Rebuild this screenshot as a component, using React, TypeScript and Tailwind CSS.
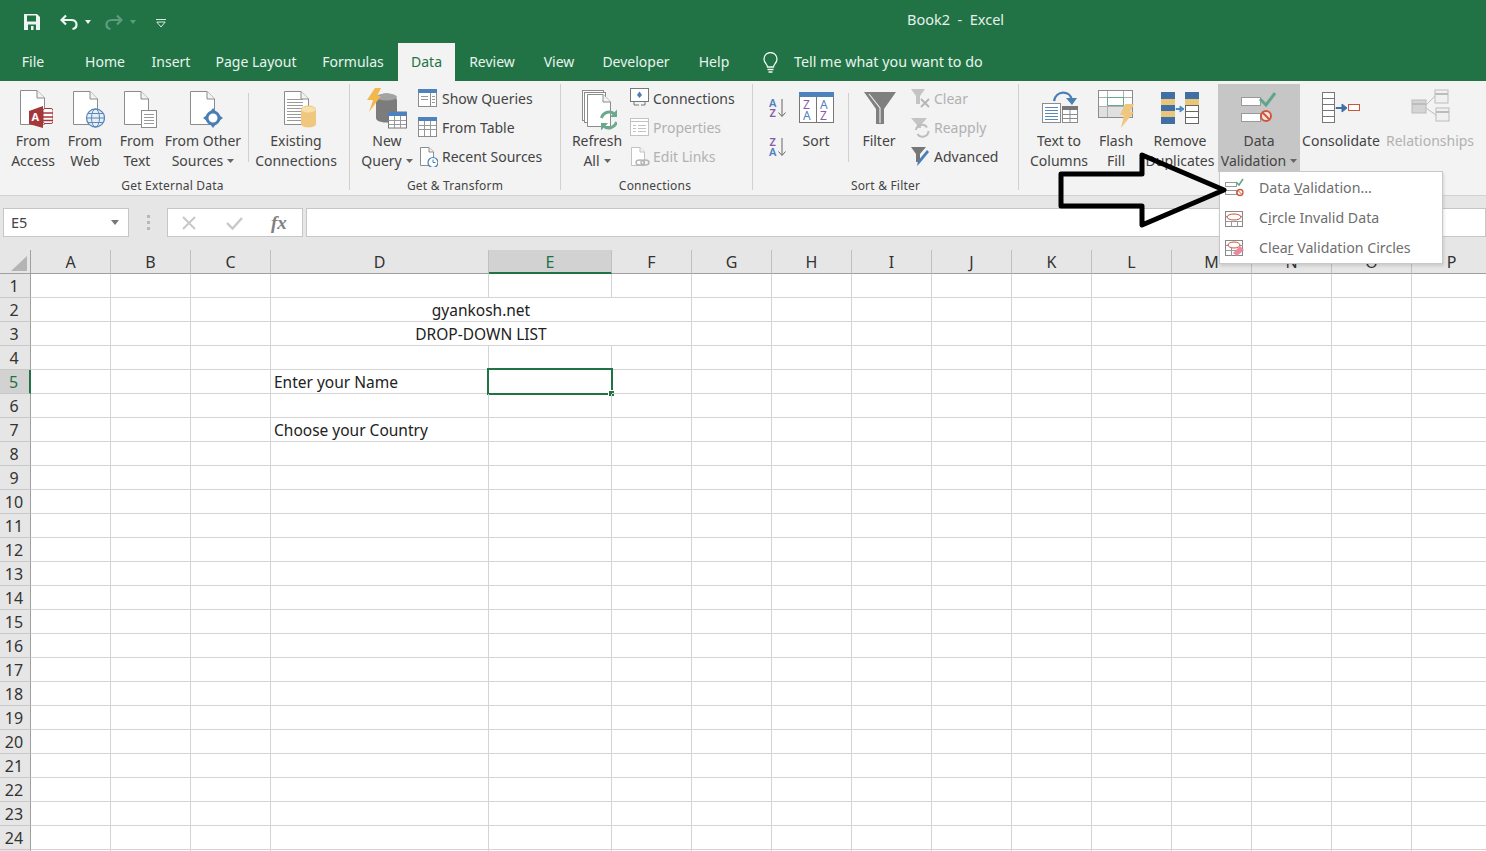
import React from "react";

const F = "font-['Noto_Sans',sans-serif]";

function I({ x, y, w, h, children, cls = "" }: { x: number; y: number; w: number; h: number; children?: React.ReactNode; cls?: string }) {
  return (
    <svg width={w} height={h} viewBox={`${x} ${y} ${w} ${h}`} className={"shrink-0 block " + cls}>
      {children}
    </svg>
  );
}

function Page({ x, y, w = 24, h = 34, stroke = "#8c8c8c", fold = 8 }: { x: number; y: number; w?: number; h?: number; stroke?: string; fold?: number }) {
  return (
    <g>
      <path d={`M${x + 0.5} ${y + 0.5}H${x + w - fold}L${x + w - 0.5} ${y + fold}V${y + h - 0.5}H${x + 0.5}Z`} fill="#fff" stroke={stroke} />
      <path d={`M${x + w - fold} ${y + 0.5}V${y + fold}H${x + w - 0.5}`} fill="#f3f3f3" stroke={stroke} />
    </g>
  );
}

function Lines({ x, y, w, n, gap = 3, c = "#9a9a9a" }: { x: number; y: number; w: number; n: number; gap?: number; c?: string }) {
  return (
    <g stroke={c}>
      {Array.from({ length: n }).map((_, i) => (
        <path key={i} d={`M${x} ${y + i * gap + 0.5}H${x + w}`} />
      ))}
    </g>
  );
}

function Caret({ c = "#666" }: { c?: string }) {
  return (
    <svg width="7" height="4" viewBox="0 0 7 4" className="inline-block ml-[4px] mb-[2px]">
      <path d="M0 0H7L3.5 4Z" fill={c} />
    </svg>
  );
}

function Big({ cls, a, b, caret, icon, dim }: { cls: string; a: string; b?: string; caret?: boolean; icon: React.ReactNode; dim?: boolean }) {
  return (
    <div className={"flex flex-col items-center shrink-0 pt-[4px] " + cls}>
      <div className="h-[42px] flex justify-center">{icon}</div>
      <div className={"mt-[1px] text-center leading-[20px] text-[14px] whitespace-nowrap " + (dim ? "text-[#b1b1b1]" : "text-[#444444]")}>
        <div>{a}</div>
        {b && (
          <div>
            {b}
            {caret && <Caret />}
          </div>
        )}
      </div>
    </div>
  );
}

function Small({ icon, text, dim, gap }: { icon: React.ReactNode; text: string; dim?: boolean; gap: string }) {
  return (
    <div className={"h-[29px] flex items-center text-[14px] whitespace-nowrap " + gap + " " + (dim ? "text-[#b1b1b1]" : "text-[#444444]")}>
      {icon}
      <span>{text}</span>
    </div>
  );
}

function Sep({ cls }: { cls: string }) {
  return <div className={"w-px bg-[#d0d0d0] shrink-0 " + cls} />;
}

function GroupLabel({ text, cls = "" }: { text: string; cls?: string }) {
  return <div className={"h-[20px] leading-[20px] text-center text-[12px] text-[#444444] tracking-[0.2px] " + cls}>{text}</div>;
}

const tabs: [string, string][] = [
  ["File", "w-[66px]"],
  ["Home", "w-[78px]"],
  ["Insert", "w-[54px]"],
  ["Page Layout", "w-[116px]"],
  ["Formulas", "w-[78px]"],
];
const tabs2: [string, string][] = [
  ["Review", "w-[74px]"],
  ["View", "w-[60px]"],
  ["Developer", "w-[94px]"],
  ["Help", "w-[62px]"],
];

function TitleBar() {
  return (
    <div className="h-[43px] bg-[#217346] relative flex items-center">
      <div className="flex items-center pl-[24px]">
        <svg width="16" height="16" viewBox="0 0 16 16" className="shrink-0">
          <path d="M0 0H13L16 3V16H0Z" fill="#eef6f1" />
          <rect x="3" y="1.5" width="9" height="6" fill="#217346" />
          <rect x="4" y="10.5" width="8" height="5.5" fill="#217346" />
          <rect x="7" y="12" width="2.5" height="4" fill="#eef6f1" />
        </svg>
        <svg width="18" height="16" viewBox="0 0 18 16" className="ml-[20px] shrink-0">
          <path d="M6 1.5L1.5 6L6 10.5" fill="none" stroke="#eef6f1" strokeWidth="2.2" />
          <path d="M2 6H11C14.5 6 16.5 8 16.5 10.5C16.5 13 15 14.6 12.5 15" fill="none" stroke="#eef6f1" strokeWidth="2.2" />
        </svg>
        <svg width="6" height="4" viewBox="0 0 6 4" className="ml-[7px] shrink-0">
          <path d="M0 0H6L3 4Z" fill="#eef6f1" />
        </svg>
        <svg width="18" height="16" viewBox="0 0 18 16" className="ml-[14px] shrink-0">
          <path d="M12 1.5L16.5 6L12 10.5" fill="none" stroke="#5f9c7c" strokeWidth="2.2" />
          <path d="M16 6H7C3.5 6 1.5 8 1.5 10.5C1.5 13 3 14.6 5.5 15" fill="none" stroke="#5f9c7c" strokeWidth="2.2" />
        </svg>
        <svg width="6" height="4" viewBox="0 0 6 4" className="ml-[7px] shrink-0">
          <path d="M0 0H6L3 4Z" fill="#5f9c7c" />
        </svg>
        <svg width="10" height="9" viewBox="0 0 10 9" className="ml-[20px] mt-[3px] shrink-0">
          <path d="M0 0.5H10" stroke="#dbe9e1" />
          <path d="M0.8 3H9.2L5 8Z" fill="none" stroke="#dbe9e1" />
        </svg>
      </div>
      <div className="absolute left-[907px] top-[9px] text-[14.5px] leading-[20px] text-[#e6f1eb] whitespace-pre">Book2  -  Excel</div>
    </div>
  );
}

function TabRow() {
  return (
    <div className="h-[38px] bg-[#217346] flex text-[14px] text-[#e8f3ed]">
      {tabs.map(([t, w]) => (
        <div key={t} className={"text-center leading-[37px] " + w}>
          {t}
        </div>
      ))}
      <div className="w-[6px]" />
      <div className="w-[57px] bg-[#f3f3f3] text-[#217346] text-center leading-[37px]">Data</div>
      {tabs2.map(([t, w]) => (
        <div key={t} className={"text-center leading-[37px] " + w}>
          {t}
        </div>
      ))}
      <div className="ml-[18px] flex items-center gap-[16px] h-[37px]">
        <svg width="15" height="22" viewBox="0 0 15 22" className="shrink-0 mt-[2px]">
          <path d="M4.5 15C4.5 12.5 1 11 1 7A6.5 6.5 0 0 1 14 7C14 11 10.5 12.5 10.5 15Z" fill="none" stroke="#eef6f1" strokeWidth="1.3" />
          <path d="M4.5 17.5H10.5M5.5 20H9.5" stroke="#eef6f1" strokeWidth="1.3" />
        </svg>
        <span className="text-[14.3px] text-[#e8f3ed] whitespace-nowrap">Tell me what you want to do</span>
      </div>
    </div>
  );
}

const G = "#8c8c8c";

function Ribbon() {
  return (
    <div className="h-[115px] bg-[#f3f3f3] border-b border-[#d2d2d2] flex pt-[3px]">
      {/* Get External Data */}
      <div className="w-[350px] shrink-0 flex flex-col border-r border-[#d0d0d0] mb-[5px]">
        <div className="h-[88px] flex pl-[7px]">
          <Big cls="w-[52px]" a="From" b="Access" icon={
            <I x={13} y={88} w={40} h={42}>
              <Page x={20} y={90} w={25} h={35} />
              <path d="M29 111L43 106V128L29 124Z" fill="#a4373a" />
              <text x={31.5} y={121} fontSize="11" fontWeight="700" fill="#fff" fontFamily="Noto Sans">A</text>
              <rect x={43} y={108.5} width={10} height={15} rx={2} fill="#fff" stroke="#a4373a" />
              <path d="M43 113H53M43 117H53M43 120.5H53" stroke="#a4373a" strokeWidth="1.4" />
            </I>} />
          <Big cls="w-[52px]" a="From" b="Web" icon={
            <I x={65} y={88} w={40} h={42}>
              <Page x={73} y={91} w={25} h={34} />
              <circle cx={95.5} cy={118} r={9} fill="#e6eef7" stroke="#5b88b8" strokeWidth="1.3" />
              <ellipse cx={95.5} cy={118} rx={4} ry={9} fill="none" stroke="#5b88b8" />
              <path d="M86.5 118H104.5M88 113.5H103M88 122.5H103" stroke="#5b88b8" />
            </I>} />
          <Big cls="w-[52px]" a="From" b="Text" icon={
            <I x={117} y={88} w={40} h={42}>
              <Page x={124} y={91} w={25} h={34} />
              <rect x={141.5} y={110.5} width={15} height={17} fill="#fff" stroke={G} />
              <Lines x={144} y={114} w={10} n={4} />
            </I>} />
          <Big cls="w-[80px]" a="From Other" b="Sources" caret icon={
            <I x={183} y={88} w={40} h={42}>
              <Page x={190} y={91} w={25} h={34} />
              <circle cx={213} cy={118} r={6} fill="#fff" stroke="#4a7fb5" strokeWidth="3" />
              <path d="M213 108L216 112H210ZM213 128L216 124H210ZM203 118L207 115V121ZM223 118L219 115V121Z" fill="#4a7fb5" />
            </I>} />
          <Sep cls="ml-[5px] mt-[9px] h-[69px]" />
          <Big cls="w-[86px] ml-[4px]" a="Existing" b="Connections" icon={
            <I x={276} y={88} w={42} h={42}>
              <Page x={285} y={91} w={25} h={34} />
              <Lines x={288} y={99} w={16} n={8} />
              <path d="M302 110C302 104 317 104 317 110V124C317 128.5 302 128.5 302 124Z" fill="#f0c77e" />
              <ellipse cx={309.5} cy={109.5} rx={7} ry={3} fill="#f7dfae" />
            </I>} />
        </div>
        <GroupLabel text="Get External Data" cls="pr-[4px] mt-[5px]" />
      </div>

      {/* Get & Transform */}
      <div className="w-[211px] shrink-0 flex flex-col border-r border-[#d0d0d0] mb-[5px]">
        <div className="h-[88px] flex pl-[6px]">
          <Big cls="w-[62px]" a="New" b="Query" caret icon={
            <I x={367} y={88} w={40} h={42}>
              <path d="M376 101C376 91 397 91 397 101V118C397 124 376 124 376 118Z" fill="#7c7c7c" />
              <ellipse cx={386.5} cy={97} rx={10.5} ry={3.5} fill="#a3a3a3" />
              <path d="M375 88H381L377 96H381L369 112L373 100H367Z" fill="#f2b84b" />
              <rect x={388.5} y={112} width={18} height={16} fill="#fff" stroke="#777" />
              <rect x={388} y={112} width={19} height={4} fill="#4f81bd" />
              <path d="M388.5 120.5H406M388.5 124.5H406M394.5 116V128M400.5 116V128" stroke="#999" />
            </I>} />
          <div className="flex flex-col">
            <Small gap="gap-[4px]" text="Show Queries" icon={
              <I x={418} y={88} w={20} h={21}>
                <rect x={418.5} y={89.5} width={18} height={17} fill="#fff" stroke={G} />
                <rect x={418} y={89} width={19} height={4} fill="#4f81bd" />
                <path d="M430.5 93V106" stroke={G} />
                <Lines x={432} y={96} w={3} n={3} gap={3} />
                <Lines x={421} y={96} w={7} n={2} gap={3} />
              </I>} />
            <Small gap="gap-[4px]" text="From Table" icon={
              <I x={418} y={117} w={20} h={21}>
                <rect x={418.5} y={117.5} width={18} height={19} fill="#fff" stroke={G} />
                <rect x={418} y={117} width={19} height={4} fill="#4f81bd" />
                <path d="M418.5 125.5H436M418.5 129.5H436M424.5 121V136M430.5 121V136" stroke="#999" />
              </I>} />
            <Small gap="gap-[4px]" text="Recent Sources" icon={
              <I x={418} y={146} w={20} h={21}>
                <Page x={420} y={147} w={14} h={19} fold={5} />
                <circle cx={433} cy={162.5} r={5} fill="#fff" stroke="#4a7fb5" strokeWidth="1.2" />
                <path d="M433 159.5V162.5H435.5" fill="none" stroke="#4a7fb5" />
              </I>} />
          </div>
        </div>
        <GroupLabel text="Get & Transform" cls="mt-[5px]" />
      </div>

      {/* Connections */}
      <div className="w-[192px] shrink-0 flex flex-col border-r border-[#d0d0d0] mb-[5px]">
        <div className="h-[88px] flex pl-[6px]">
          <Big cls="w-[60px]" a="Refresh" b="All" caret icon={
            <I x={577} y={88} w={40} h={42}>
              <rect x={582.5} y={90.5} width={21} height={30} fill="#fff" stroke={G} />
              <rect x={584.5} y={92.5} width={21} height={30} fill="#fff" stroke={G} />
              <Page x={587} y={94} w={24} h={33} />
              <path d="M601.5 118A8 8 0 0 1 615 114.5" fill="none" stroke="#6ba98f" strokeWidth="3" />
              <path d="M616.5 122A8 8 0 0 1 603 125.5" fill="none" stroke="#6ba98f" strokeWidth="3" />
              <path d="M617 109.5V117H610ZM601 130.5V123H608Z" fill="#6ba98f" />
            </I>} />
          <div className="flex flex-col ml-[3px]">
            <Small gap="gap-[3px]" text="Connections" icon={
              <I x={630} y={88} w={20} h={21}>
                <rect x={630.5} y={88.5} width={18} height={13} fill="#fff" stroke="#777" />
                <path d="M639.5 91.5L642 95L639.5 98L637 95Z" fill="#4a7fb5" />
                <path d="M634 101.5V105H639M645 101.5V105H641" fill="none" stroke="#777" />
              </I>} />
            <Small gap="gap-[3px]" dim text="Properties" icon={
              <I x={630} y={117} w={20} h={21}>
                <rect x={630.5} y={118.5} width={18} height={17} fill="#fff" stroke="#c2c2c2" />
                <path d="M630 121.5H649" stroke="#c2c2c2" />
                <path d="M633 125.5H636M633 128.5H636M633 131.5H636M638 125.5H646M638 128.5H646M638 131.5H646" stroke="#c2c2c2" />
              </I>} />
            <Small gap="gap-[3px]" dim text="Edit Links" icon={
              <I x={630} y={146} w={20} h={21}>
                <Page x={631} y={147} w={14} h={19} fold={5} stroke="#c2c2c2" />
                <ellipse cx={640} cy={162.5} rx={4} ry={2.5} fill="none" stroke="#b5b5b5" strokeWidth="1.5" />
                <ellipse cx={645} cy={162.5} rx={4} ry={2.5} fill="none" stroke="#b5b5b5" strokeWidth="1.5" />
              </I>} />
          </div>
        </div>
        <GroupLabel text="Connections" cls="pr-[3px] mt-[5px]" />
      </div>

      {/* Sort & Filter */}
      <div className="w-[266px] shrink-0 flex flex-col border-r border-[#d0d0d0] mb-[5px]">
        <div className="h-[88px] flex pl-[15px]">
          <div className="flex flex-col w-[20px] shrink-0 pt-[13px] gap-[18px]">
            <I x={768} y={97} w={20} h={21}>
              <text x={769} y={106.5} fontSize="11" fontWeight="600" fill="#4f81bd" fontFamily="Noto Sans">A</text>
              <text x={769.5} y={116.5} fontSize="11" fontWeight="600" fill="#8a5aa8" fontFamily="Noto Sans">Z</text>
              <path d="M782 99V116M778.5 112.5L782 116.5L785.5 112.5" fill="none" stroke="#666" />
            </I>
            <I x={768} y={136} w={20} h={21}>
              <text x={769.5} y={146} fontSize="11" fontWeight="600" fill="#8a5aa8" fontFamily="Noto Sans">Z</text>
              <text x={769} y={156} fontSize="11" fontWeight="600" fill="#4f81bd" fontFamily="Noto Sans">A</text>
              <path d="M782 138V155M778.5 151.5L782 155.5L785.5 151.5" fill="none" stroke="#666" />
            </I>
          </div>
          <Big cls="w-[40px] ml-[8px]" a="Sort" icon={
            <I x={798} y={88} w={36} h={42}>
              <rect x={799.5} y={92.5} width={34} height={30} fill="#fff" stroke="#777" />
              <rect x={799} y={92} width={35} height={5} fill="#4f81bd" />
              <path d="M816.5 97V122" stroke="#777" />
              <text x={803} y={109} fontSize="12" fill="#8a5aa8" fontFamily="Noto Sans">Z</text>
              <text x={803} y={120} fontSize="12" fill="#4f81bd" fontFamily="Noto Sans">A</text>
              <text x={820} y={109} fontSize="12" fill="#4f81bd" fontFamily="Noto Sans">A</text>
              <text x={820} y={120} fontSize="12" fill="#8a5aa8" fontFamily="Noto Sans">Z</text>
            </I>} />
          <Sep cls="ml-[12px] mt-[9px] h-[69px]" />
          <Big cls="w-[42px] ml-[9px]" a="Filter" icon={
            <I x={859} y={88} w={40} h={42}>
              <path d="M864 92H896L884 109V124H876V109Z" fill="#7f7f7f" />
              <path d="M869 94L880 108V123" fill="none" stroke="#e8e8e8" strokeWidth="1.2" />
            </I>} />
          <div className="flex flex-col ml-[11px]">
            <Small gap="gap-[3px]" dim text="Clear" icon={
              <I x={911} y={88} w={20} h={21}>
                <path d="M911 89H925L920 96V104H916V96Z" fill="#c4c4c4" />
                <path d="M921 99L929 107M929 99L921 107" stroke="#b5b5b5" strokeWidth="1.8" />
              </I>} />
            <Small gap="gap-[3px]" dim text="Reapply" icon={
              <I x={911} y={117} w={20} h={21}>
                <path d="M911 118H927L921 125V128H917V125Z" fill="#c4c4c4" />
                <path d="M916 130A6 6 0 0 1 927 127.5" fill="none" stroke="#bdbdbd" strokeWidth="2" />
                <path d="M928.5 131A6 6 0 0 1 917.5 134" fill="none" stroke="#bdbdbd" strokeWidth="2" />
              </I>} />
            <Small gap="gap-[3px]" text="Advanced" icon={
              <I x={911} y={146} w={20} h={21}>
                <path d="M911 147H926L920 154V162H916V154Z" fill="#777" />
                <path d="M929 152L920 163L917 166L918 161L927 150Z" fill="#4a7fb5" />
              </I>} />
          </div>
        </div>
        <GroupLabel text="Sort & Filter" cls="mt-[5px]" />
      </div>

      {/* Data Tools */}
      <div className="flex-1 flex pl-[8px] h-[88px]">
        <Big cls="w-[64px]" a="Text to" b="Columns" icon={
          <I x={1039} y={88} w={40} h={42}>
            <rect x={1042.5} y={103.5} width={18} height={19} fill="#fff" stroke={G} />
            <Lines x={1045} y={107} w={13} n={5} c="#5b88b8" />
            <rect x={1062.5} y={106.5} width={15} height={16} fill="#fff" stroke={G} />
            <rect x={1062} y={106} width={16} height={4} fill="#777" />
            <path d="M1062.5 114.5H1078M1062.5 118.5H1078M1070 110V122" stroke={G} />
            <path d="M1054 101C1056 90 1070 90 1072 100" fill="none" stroke="#4a7fb5" strokeWidth="2.4" />
            <path d="M1066 98H1077L1072 105Z" fill="#4a7fb5" />
          </I>} />
        <Big cls="w-[46px] ml-[2px]" a="Flash" b="Fill" icon={
          <I x={1097} y={88} w={40} h={42}>
            <rect x={1099.5} y={90.5} width={34} height={27} fill="#fff" stroke={G} />
            <rect x={1100} y={106} width={33} height={11} fill="#e0e0e0" />
            <path d="M1100 97.5H1133M1100 106.5H1133M1108.5 91V117M1124.5 91V106" stroke="#b0b0b0" />
            <rect x={1108.5} y={97.5} width={16} height={8} fill="#fff" stroke="#6ba98f" />
            <path d="M1126 104H1135L1131 112H1135L1122 128L1125 115H1121Z" fill="#f0c77e" />
          </I>} />
        <Big cls="w-[76px] ml-[3px]" a="Remove" b="Duplicates" icon={
          <I x={1160} y={88} w={40} h={42}>
            <rect x={1161} y={92} width={14} height={32} fill="#3f6fa5" />
            <rect x={1161} y={99} width={14} height={6} fill="#e9c679" />
            <rect x={1161} y={111} width={14} height={6} fill="#e9c679" />
            <rect x={1185.5} y={92.5} width={13} height={31} fill="#fff" stroke="#666" />
            <rect x={1185} y={92} width={14} height={7} fill="#3f6fa5" />
            <rect x={1185} y={99} width={14} height={6} fill="#e9c679" />
            <path d="M1185 105.5H1199M1185 111.5H1199M1185 117.5H1199" stroke="#666" />
            <path d="M1176 108.5H1180V106L1184 109L1180 112V109.5H1176Z" fill="#4a8ac5" stroke="#4a8ac5" />
          </I>} />
        <Big cls="w-[82px] bg-[#c6c6c6]" a="Data" b="Validation" caret icon={
          <I x={1239} y={88} w={40} h={42}>
            <rect x={1241.5} y={97.5} width={19} height={8} fill="#fff" stroke="#999" />
            <rect x={1241.5} y={113.5} width={19} height={8} fill="#fff" stroke="#999" />
            <path d="M1260 99L1266 105L1275 93" fill="none" stroke="#5fa58c" strokeWidth="3" />
            <circle cx={1266} cy={116} r={5} fill="#f3e3dc" stroke="#d0563b" strokeWidth="2" />
            <path d="M1262.5 112.5L1269.5 119.5" stroke="#d0563b" strokeWidth="2" />
          </I>} />
        <Big cls="w-[82px]" a="Consolidate" icon={
          <I x={1321} y={88} w={42} h={42}>
            <rect x={1323.5} y={92.5} width={12} height={30} fill="#fff" stroke="#777" />
            <path d="M1324 98.5H1335M1324 104.5H1335M1324 110.5H1335M1324 116.5H1335" stroke="#777" />
            <path d="M1337 107.5H1343V104L1348 108L1343 112V108.5H1337Z" fill="#3f6fa5" stroke="#3f6fa5" />
            <rect x={1349.5} y={104.5} width={11} height={6} fill="#fff" stroke="#c8553d" />
          </I>} />
        <Big cls="w-[96px]" dim a="Relationships" icon={
          <I x={1410} y={88} w={40} h={42}>
            <rect x={1412} y={100} width={14} height={13} fill="#d4d4d4" stroke="#bcbcbc" />
            <rect x={1435} y={90} width={13} height={13} fill="#f0f0f0" stroke="#bcbcbc" />
            <rect x={1436} y={108} width={13} height={13} fill="#f0f0f0" stroke="#bcbcbc" />
            <path d="M1412 104H1426M1435 94H1448M1436 112H1449" stroke="#bcbcbc" strokeWidth="2" />
            <path d="M1426 105L1435 96M1426 108L1436 115" fill="none" stroke="#bcbcbc" />
          </I>} />
      </div>
    </div>
  );
}

function FormulaBar() {
  return (
    <div className="h-[54px] bg-[#e6e6e6] flex items-start pt-[12px] pl-[3px]">
      <div className="w-[126px] h-[29px] bg-white border border-[#c6c6c6] flex items-center justify-between px-[7px] text-[14.5px] text-[#444444] shrink-0">
        <span>E5</span>
        <svg width="8" height="5" viewBox="0 0 8 5" className="mr-[2px]">
          <path d="M0 0H8L4 5Z" fill="#777" />
        </svg>
      </div>
      <div className="w-[38px] h-[29px] flex flex-col items-center justify-center gap-[3px] shrink-0">
        <div className="w-[3px] h-[3px] bg-[#b8b8b8]" />
        <div className="w-[3px] h-[3px] bg-[#b8b8b8]" />
        <div className="w-[3px] h-[3px] bg-[#b8b8b8]" />
      </div>
      <div className="w-[136px] h-[29px] bg-white border border-[#c6c6c6] flex items-center shrink-0 relative pl-[13px] gap-[29px]">
        <svg width="16" height="14" viewBox="0 0 16 14">
          <path d="M2 1L14 13M14 1L2 13" stroke="#c8c8c8" strokeWidth="2" />
        </svg>
        <svg width="17" height="14" viewBox="0 0 17 14">
          <path d="M1 7L6.5 12.5L16 2" fill="none" stroke="#c8c8c8" strokeWidth="2.4" />
        </svg>
        <span className="font-['Liberation_Serif',serif] italic font-bold text-[19px] leading-none text-[#808080] ml-[-1px]">fx</span>
      </div>
      <div className="ml-[3px] flex-1 h-[29px] bg-white border border-[#c6c6c6]" />
    </div>
  );
}

const cols = ["A", "B", "C", "D", "E", "F", "G", "H", "I", "J", "K", "L", "M", "N", "O", "P"];

function Sheet() {
  const rows = Array.from({ length: 25 }, (_, i) => i + 1);
  return (
    <div className="grid grid-cols-[31px_80px_80px_80px_218px_123px_repeat(11,80px)] auto-rows-[24px] w-max bg-white text-[15.5px] text-[#222222]">
      <div className="bg-[#e6e6e6] border-r border-b border-[#a0a0a0] flex items-end justify-end pr-[3px] pb-[2px]">
        <svg width="16" height="15" viewBox="0 0 16 15">
          <path d="M16 0V15H0Z" fill="#b4b4b4" />
        </svg>
      </div>
      {cols.map((c) => (
        <div
          key={c}
          className={
            "text-[16px] leading-[24px] text-center border-r " +
            (c === "E"
              ? "bg-[#d2d2d2] border-b-2 border-b-[#217346] border-r-[#c0c0c0] text-[#217346]"
              : "bg-[#e6e6e6] border-b border-b-[#a0a0a0] border-r-[#c0c0c0] text-[#333333]")
          }
        >
          {c}
        </div>
      ))}
      {rows.map((r) => (
        <React.Fragment key={r}>
          <div
            className={
              "text-[16px] leading-[24px] text-center pr-[2px] border-b border-b-[#c8c8c8] " +
              (r === 5
                ? "bg-[#d2d2d2] text-[#217346] border-r-2 border-r-[#217346]"
                : "bg-[#e6e6e6] text-[#333333] border-r border-r-[#a0a0a0]")
            }
          >
            {r}
          </div>
          {cols.map((c) => {
            if ((c === "E" || c === "F") && (r === 2 || r === 3)) return null;
            if (c === "D" && (r === 2 || r === 3)) {
              return (
                <div key={c} className="col-span-3 border-r border-b border-[#d4d4d4] text-center leading-[25px]">
                  {r === 2 ? "gyankosh.net" : "DROP-DOWN LIST"}
                </div>
              );
            }
            return (
              <div key={c} className="border-r border-b border-[#d4d4d4] leading-[25px] pl-[3px] whitespace-nowrap relative">
                {c === "D" && r === 5 && "Enter your Name"}
                {c === "D" && r === 7 && "Choose your Country"}
                {c === "E" && r === 5 && (
                  <div className="absolute -left-[2px] -top-[2px] w-[126px] h-[27px] border-2 border-[#217346]">
                    <div className="absolute -right-[3px] -bottom-[3px] w-[6px] h-[6px] bg-[#217346] border-l border-t border-white" />
                  </div>
                )}
              </div>
            );
          })}
        </React.Fragment>
      ))}
    </div>
  );
}

function Menu() {
  const row = "h-[30px] flex items-center pl-[5px] gap-[15px] whitespace-nowrap";
  const label = "mt-[2px]";
  return (
    <div className="absolute left-[1219px] top-[171px] w-[224px] h-[93px] bg-white border border-[#c8c8c8] shadow-[1px_2px_3px_rgba(0,0,0,0.12)] text-[14.2px] text-[#6e6e6e] flex flex-col">
      <div className={row}>
        <I x={1225} y={176} w={19} h={19}>
          <rect x={1225.5} y={180.5} width={11} height={4} fill="#fff" stroke="#999" />
          <rect x={1225.5} y={188.5} width={11} height={4} fill="#fff" stroke="#999" />
          <path d="M1236 180L1239 183L1243 177" fill="none" stroke="#5fa58c" strokeWidth="1.6" />
          <circle cx={1240} cy={190.5} r={3} fill="#fff" stroke="#d0563b" strokeWidth="1.3" />
          <path d="M1238 188.5L1242 192.5" stroke="#d0563b" />
        </I>
        <span className={label}>Data <u>V</u>alidation...</span>
      </div>
      <div className={row}>
        <I x={1225} y={206} w={19} h={19}>
          <rect x={1225.5} y={209.5} width={17} height={15} fill="#fff" stroke="#888" />
          <path d="M1225.5 214.5H1243M1225.5 219.5H1243M1231.5 219.5V225M1237.5 219.5V225" stroke="#999" />
          <ellipse cx={1234} cy={215} rx={7} ry={3} fill="#fff" stroke="#c8553d" />
        </I>
        <span className={label}>C<u>i</u>rcle Invalid Data</span>
      </div>
      <div className={row}>
        <I x={1225} y={236} w={19} h={20}>
          <rect x={1225.5} y={239.5} width={17} height={15} fill="#fff" stroke="#888" />
          <path d="M1225.5 244.5H1243M1225.5 249.5H1243M1231.5 244V255" stroke="#999" />
          <ellipse cx={1234} cy={244} rx={6} ry={3} fill="#fff" stroke="#c8553d" />
          <path d="M1233 252L1240 245L1244 249L1237 255Z" fill="#e88a9c" />
        </I>
        <span className={label}>Clea<u>r</u> Validation Circles</span>
      </div>
    </div>
  );
}

export default function App() {
  return (
    <div className={"relative w-[1486px] h-[851px] overflow-hidden bg-white " + F}>
      <TitleBar />
      <TabRow />
      <Ribbon />
      <FormulaBar />
      <Sheet />
      <Menu />
      <svg width="190" height="90" viewBox="1050 145 190 90" className="absolute left-[1050px] top-[145px]">
        <path d="M1061 174H1142V155L1224 190L1142 225V206H1061Z" fill="none" stroke="#000" strokeWidth="5" strokeLinejoin="round" />
      </svg>
    </div>
  );
}
